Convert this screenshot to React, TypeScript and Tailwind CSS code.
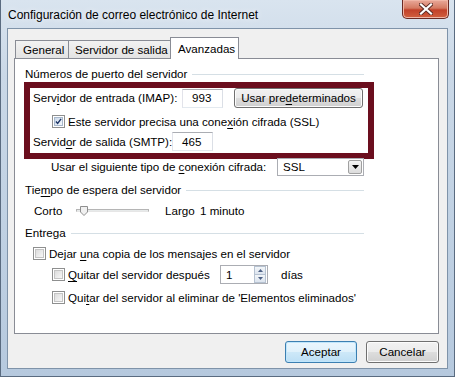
import React from "react";

function U({ children }: { children: React.ReactNode }) {
  return <span className="underline underline-offset-[2px]">{children}</span>;
}

function GroupTitle({ children, className = "" }: { children: React.ReactNode; className?: string }) {
  return (
    <div className={`ml-[10px] flex h-[14px] w-[339px] items-center ${className}`}>
      <span className="whitespace-nowrap leading-[14px]">{children}</span>
      <div className="ml-[5px] h-px flex-1 bg-[#d5dfe5]" />
    </div>
  );
}

function CheckBox({ checked = false }: { checked?: boolean }) {
  return (
    <span className="flex h-[13px] w-[13px] shrink-0 items-center justify-center border border-[#8e8f8f] bg-white p-px">
      <span
        className={`flex h-full w-full items-center justify-center border ${
          checked
            ? "border-[#a8b8cc] bg-[linear-gradient(135deg,#cbd9ea,#f4f8fc)]"
            : "border-[#c4c4c4] bg-[linear-gradient(135deg,#dcdcdc,#f7f7f7)]"
        }`}
      >
        {checked && (
          <svg width="9" height="9" viewBox="0 0 9 9">
            <path d="M1.2 4.6 L3.4 7 L7.8 1.2" fill="none" stroke="#1c3466" strokeWidth="1.8" />
          </svg>
        )}
      </span>
    </span>
  );
}

function TextBox({ value, className = "" }: { value: string; className?: string }) {
  return (
    <div
      className={`flex h-[19px] shrink-0 items-center border border-[#abadb3] border-b-[#e3e9ef] border-r-[#dbdfe6] border-l-[#e2e3ea] bg-white pl-[9px] ${className}`}
    >
      {value}
    </div>
  );
}

function WinButton({ children, primary = false, className = "" }: { children: React.ReactNode; primary?: boolean; className?: string }) {
  return (
    <div
      className={`flex shrink-0 items-center justify-center whitespace-nowrap rounded-[3px] border ${
        primary
          ? "border-[#3c7fb1] bg-[linear-gradient(180deg,#eaf6fd_0%,#e0f1fb_48%,#cde8f8_52%,#bddff5_100%)] shadow-[inset_0_0_0_1px_#c0e6fb]"
          : "border-[#707070] bg-[linear-gradient(180deg,#f2f2f2_0%,#ebebeb_48%,#dddddd_52%,#cfcfcf_100%)] shadow-[inset_0_0_0_1px_#fcfcfc]"
      } ${className}`}
    >
      {children}
    </div>
  );
}

export default function App() {
  return (
    <div className="flex h-[377px] w-[455px] flex-col overflow-hidden border-x border-b border-[#5a6b80] bg-[linear-gradient(180deg,#d9e4ef_0%,#cad8e7_20%,#c0d1e3_60%,#b6c9de_100%)] font-['Liberation_Sans',Arial,sans-serif] text-[11.6px] text-black">
      {/* title bar */}
      <div className="flex h-[28px] items-start justify-between">
        <span className="ml-[7px] mt-[8px] whitespace-nowrap text-[12px] leading-[14px] [text-shadow:0_0_6px_#ffffff]">
          Configuración de correo electrónico de Internet
        </span>
        <div className="mr-[5px] flex h-[19px] w-[47px] items-center justify-center rounded-b-[5px] border border-t-0 border-[#6a2a24] bg-[linear-gradient(180deg,#e9a99a_0%,#d47a62_45%,#c2412a_55%,#d1603f_100%)] shadow-[inset_0_0_0_1px_#f0b6a6]">
          <svg width="14" height="12" viewBox="0 0 14 12">
            <path d="M2 1.5 L12 10.5 M12 1.5 L2 10.5" stroke="#5a2a24" strokeWidth="4" strokeLinecap="square" />
            <path d="M2 1.5 L12 10.5 M12 1.5 L2 10.5" stroke="#ffffff" strokeWidth="2.2" strokeLinecap="square" />
          </svg>
        </div>
      </div>

      {/* client area */}
      <div className="mx-[6px] mb-[7px] flex flex-1 flex-col border border-[#7f93a9] bg-[#f0f0f0]">
        {/* tabs */}
        <div className="ml-[7px] mt-[8px] flex items-end whitespace-nowrap">
          <div className="flex h-[18px] w-[54px] items-center border border-b-0 border-[#898c95] bg-[linear-gradient(180deg,#f2f2f2,#e3e3e3)] pl-[7px]">
            General
          </div>
          <div className="-ml-px flex h-[18px] w-[103px] items-center border border-b-0 border-[#898c95] bg-[linear-gradient(180deg,#f2f2f2,#e3e3e3)] pl-[6px]">
            Servidor de salida
          </div>
          <div className="relative z-10 -mb-px -ml-px flex h-[22px] w-[69px] items-start border border-b-0 border-[#898c95] bg-white pl-[7px] pt-[2px]">
            Avanzadas
          </div>
        </div>

        {/* panel */}
        <div className="ml-[6px] flex h-[276px] w-[425px] flex-col border border-[#898c95] bg-white">
          <GroupTitle className="mt-[8px]">Números de puerto del servidor</GroupTitle>

          <div className="ml-[9px] mt-[1px] flex w-[350px] flex-col border-[6px] border-[#6b0e1e] pb-[2px]">
            <div className="flex h-[20px] items-center pl-[3px]">
              <span className="w-[149px] shrink-0 whitespace-nowrap">
                Serv<U>i</U>dor de entrada (IMAP):
              </span>
              <TextBox value="993" className="w-[41px]" />
              <WinButton className="ml-[11px] h-[20px] w-[129px]">
                Usar pre<U>d</U>eterminados
              </WinButton>
            </div>
            <div className="mt-[7px] flex h-[13px] items-center pl-[22px]">
              <CheckBox checked />
              <span className="ml-[3px] whitespace-nowrap">
                Este servidor precisa una cone<U>x</U>ión cifrada (SSL)
              </span>
            </div>
            <div className="mt-[4px] flex h-[19px] items-center pl-[3px]">
              <span className="w-[139px] shrink-0 whitespace-nowrap">
                Servid<U>o</U>r de salida (SMTP):
              </span>
              <TextBox value="465" className="w-[41px]" />
            </div>
          </div>

          <div className="-mt-px ml-[36px] flex h-[18px] items-center">
            <span className="w-[226px] shrink-0 whitespace-nowrap">
              Usar el siguiente tipo de <U>c</U>onexión cifrada:
            </span>
            <div className="flex h-[18px] w-[87px] shrink-0 items-center justify-between border border-[#abadb3] bg-white pl-[5px] pr-px">
              <span>SSL</span>
              <div className="flex h-[14px] w-[14px] items-center justify-center rounded-[2px] border border-[#a0a0a0] bg-[linear-gradient(180deg,#f4f4f4,#dcdcdc)]">
                <svg width="7" height="4" viewBox="0 0 7 4">
                  <path d="M0 0 H7 L3.5 4 Z" fill="#000" />
                </svg>
              </div>
            </div>
          </div>

          <GroupTitle className="mt-[7px]">
            Tie<U>m</U>po de espera del servidor
          </GroupTitle>

          <div className="ml-[19px] mt-[7px] flex h-[14px] items-center whitespace-nowrap">
            <span className="w-[42px] shrink-0">Corto</span>
            <div className="relative h-[14px] w-[73px] shrink-0">
              <div className="absolute left-0 right-0 top-[5px] h-[3px] border border-[#b5b5b5] border-b-[#e6e6e6] bg-[#e7eaea]" />
              <svg className="absolute left-[4px] top-[2px]" width="8" height="10" viewBox="0 0 8 10">
                <path d="M0.5 0.5 H7.5 V6 L4 9.5 L0.5 6 Z" fill="#f0f0f0" stroke="#8f8f8f" />
              </svg>
            </div>
            <span className="ml-[16px] w-[35px] shrink-0">Largo</span>
            <span>1 minuto</span>
          </div>

          <GroupTitle className="mt-[8px]">Entrega</GroupTitle>

          <div className="ml-[18px] mt-[7px] flex h-[13px] items-center">
            <CheckBox />
            <span className="ml-[3px] whitespace-nowrap">
              Dejar <U>u</U>na copia de los mensajes en el servidor
            </span>
          </div>

          <div className="ml-[37px] mt-[5px] flex h-[19px] items-center">
            <CheckBox />
            <span className="ml-[3px] w-[152px] shrink-0 whitespace-nowrap">
              <U>Q</U>uitar del servidor después
            </span>
            <div className="flex h-[19px] w-[48px] shrink-0 items-center justify-between border border-[#abadb3] bg-white pl-[5px] pr-px">
              <span>1</span>
              <div className="flex h-[17px] w-[12px] flex-col">
                <div className="flex flex-1 items-center justify-center border border-[#b6c2d1] bg-[linear-gradient(180deg,#f3f6f9,#dce4ee)]">
                  <svg width="5" height="3" viewBox="0 0 5 3">
                    <path d="M0 3 L2.5 0 L5 3 Z" fill="#4d6185" />
                  </svg>
                </div>
                <div className="flex flex-1 items-center justify-center border border-t-0 border-[#b6c2d1] bg-[linear-gradient(180deg,#f3f6f9,#dce4ee)]">
                  <svg width="5" height="3" viewBox="0 0 5 3">
                    <path d="M0 0 H5 L2.5 3 Z" fill="#4d6185" />
                  </svg>
                </div>
              </div>
            </div>
            <span className="ml-[13px]">días</span>
          </div>

          <div className="ml-[37px] mt-[7px] flex h-[13px] items-center">
            <CheckBox />
            <span className="ml-[3px] whitespace-nowrap">
              Qui<U>t</U>ar del servidor al eliminar de 'Elementos eliminados'
            </span>
          </div>
        </div>

        {/* buttons */}
        <div className="mt-[7px] flex justify-end gap-[9px] pr-[8px]">
          <WinButton primary className="h-[22px] w-[72px]">
            Aceptar
          </WinButton>
          <WinButton className="h-[22px] w-[73px]">Cancelar</WinButton>
        </div>
      </div>
    </div>
  );
}
